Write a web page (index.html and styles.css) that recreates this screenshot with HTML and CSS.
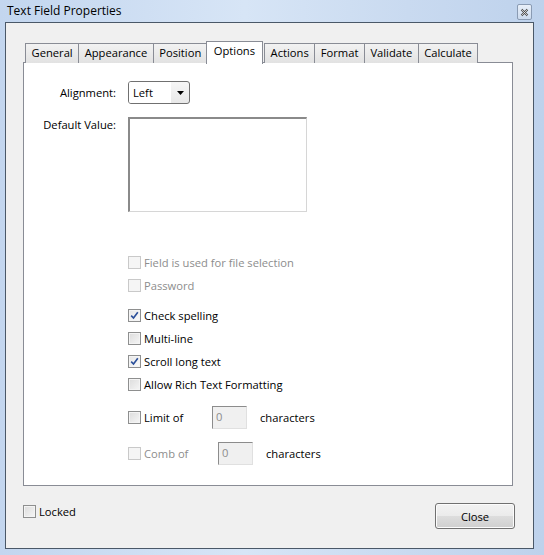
FILE: index.html
```html
<!DOCTYPE html>
<html>
<head>
<meta charset="utf-8">
<link rel="stylesheet" href="styles.css">
</head>
<body>
<div class="window">
  <div class="titlebar">
    <span class="title">Text Field Properties</span>
    <span class="xbtn"><svg width="9" height="9" viewBox="0 0 9 9"><path d="M1.5 1.5 L7.5 7.5 M7.5 1.5 L1.5 7.5" stroke="#4a4a4a" stroke-width="2" fill="none"/><path d="M1.5 1.5 L7.5 7.5 M7.5 1.5 L1.5 7.5" stroke="#ffffff" stroke-width="0.7" fill="none"/></svg></span>
  </div>
  <div class="client">
    <div class="tabs">
      <span class="tab">General</span>
      <span class="tab">Appearance</span>
      <span class="tab">Position</span>
      <span class="tab active">Options</span>
      <span class="tab">Actions</span>
      <span class="tab">Format</span>
      <span class="tab">Validate</span>
      <span class="tab">Calculate</span>
    </div>
    <div class="panel">
      <div class="formrow">
        <span class="label lbl-align">Alignment:</span>
        <span class="combo"><span class="combo-text">Left</span><span class="combo-arrow"><svg width="7" height="4" viewBox="0 0 7 4"><path d="M0 0 H7 L3.5 4 Z" fill="#000"/></svg></span></span>
      </div>
      <div class="formrow row-default">
        <span class="label lbl-default">Default Value:</span>
        <span class="textarea"></span>
      </div>
      <div class="checks">
        <div class="check disabled"><span class="box"></span>Field is used for file selection</div>
        <div class="check disabled"><span class="box"></span>Password</div>
        <div class="check group"><span class="box checked"><svg width="9" height="9" viewBox="0 0 9 9"><path d="M1.2 4.6 L3.5 7 L7.8 1.2" stroke="#2b4f9a" stroke-width="1.6" fill="none"/></svg></span>Check spelling</div>
        <div class="check"><span class="box"></span>Multi-line</div>
        <div class="check"><span class="box checked"><svg width="9" height="9" viewBox="0 0 9 9"><path d="M1.2 4.6 L3.5 7 L7.8 1.2" stroke="#2b4f9a" stroke-width="1.6" fill="none"/></svg></span>Scroll long text</div>
        <div class="check"><span class="box"></span>Allow Rich Text Formatting</div>
        <div class="check limit"><span class="box"></span><span class="lim-label">Limit of</span><span class="num">0</span><span class="chars">characters</span></div>
        <div class="check comb disabled"><span class="box"></span><span class="comb-label">Comb of</span><span class="num">0</span><span class="chars enabled">characters</span></div>
      </div>
    </div>
    <div class="footer">
      <div class="check locked"><span class="box"></span>Locked</div>
      <span class="button">Close</span>
    </div>
  </div>
</div>
</body>
</html>
```
FILE: styles.css
```css
* { box-sizing: border-box; }
html, body { margin: 0; padding: 0; }
body {
  width: 544px;
  height: 555px;
  overflow: hidden;
  font-family: "Open Sans", "Noto Sans", sans-serif;
  font-size: 11.2px;
  color: #000;
}
.window {
  width: 544px;
  height: 555px;
  background: linear-gradient(90deg, #c3d6ef 0%, #d7e5f6 45%, #c9daf0 75%, #bed2ec 100%);
  padding: 0 10px 6px 5px;
  display: flex;
  flex-direction: column;
}
.titlebar {
  height: 22px;
  display: flex;
  align-items: center;
  justify-content: space-between;
  padding-left: 2px;
  flex: none;
}
.title {
  font-size: 12px;
  color: #000;
  margin-top: -1px;
}
.xbtn {
  width: 15px;
  height: 16px;
  border: 1px solid #8a9bb3;
  border-radius: 2px;
  background: linear-gradient(#e9f0f9, #ccdbee);
  display: flex;
  align-items: center;
  justify-content: center;
  margin-right: 2px;
  margin-top: 2px;
}
.client {
  flex: 1;
  background: #f0f0f0;
  border: 1px solid #4a5868;
  padding: 18px 20px 0 17px;
  display: flex;
  flex-direction: column;
}
.tabs {
  display: flex;
  align-items: flex-end;
  height: 22px;
  padding-left: 2px;
  position: relative;
  z-index: 1;
  margin-bottom: -1px;
}
.tab {
  height: 20px;
  border: 1px solid #898c95;
  border-bottom: none;
  margin-right: -1px;
  padding: 0 5.5px;
  background: linear-gradient(#f2f2f2, #e2e2e2);
  line-height: 18px;
  white-space: nowrap;
}
.tab.active {
  height: 23px;
  background: #fff;
  padding: 0 7px;
  margin: 0 1px 0 0;
  line-height: 18px;
  position: relative;
  z-index: 2;
  margin-bottom: -1px;
  margin-left: -1px;
}
.panel {
  height: 424px;
  background: #fff;
  border: 1px solid #898c95;
  padding: 18px 0 0 0;
  display: flex;
  flex-direction: column;
}
.formrow {
  display: flex;
  align-items: flex-start;
}
.label {
  width: 92px;
  text-align: right;
  flex: none;
}
.lbl-align { line-height: 23px; }
.row-default { margin-top: 13px; }
.lbl-default { line-height: 14px; margin-top: 1px; width: 92px; }
.combo {
  margin-left: 12px;
  width: 62px;
  height: 23px;
  border: 1px solid #707070;
  border-radius: 3px;
  background: linear-gradient(#f6f6f6, #e8e8e8);
  display: flex;
  align-items: center;
}
.combo-text {
  flex: 1;
  padding-left: 4px;
  background: #fff;
  height: 100%;
  line-height: 21px;
  border-radius: 2px 0 0 2px;
}
.combo-arrow {
  width: 18px;
  display: flex;
  justify-content: center;
  align-items: center;
}
.textarea {
  margin-left: 12px;
  width: 179px;
  height: 95px;
  background: #fff;
  border-top: 2px solid #8a8a8a;
  border-left: 2px solid #8a8a8a;
  border-right: 1px solid #d6d6d6;
  border-bottom: 1px solid #d6d6d6;
}
.checks {
  margin-top: 39px;
  padding-left: 104px;
  display: flex;
  flex-direction: column;
}
.check {
  height: 23px;
  display: flex;
  align-items: center;
  white-space: nowrap;
}
.check.group { margin-top: 7px; }
.check.limit { margin-top: 10px; }
.check.comb { margin-top: 13px; }
.box {
  width: 13px;
  height: 13px;
  border: 1px solid #8e8f8f;
  background: linear-gradient(135deg, #dcdcdc, #f6f6f6);
  box-shadow: inset 0 0 0 1px #f4f4f4;
  margin-right: 3px;
  flex: none;
  display: flex;
  align-items: center;
  justify-content: center;
}
.box.checked {
  background: linear-gradient(135deg, #e6e6e6, #fbfbfb);
}
.check.disabled { color: #8d8d8d; }
.check.disabled .box {
  border-color: #c9c9c9;
  background: #f5f5f5;
  box-shadow: none;
}
.lim-label { width: 68px; }
.comb-label { width: 74px; color: #8d8d8d; }
.num {
  width: 35px;
  height: 23px;
  background: #f0f0f0;
  border-top: 1px solid #8c8c8c;
  border-left: 1px solid #8c8c8c;
  border-right: 1px solid #e0e0e0;
  border-bottom: 1px solid #e0e0e0;
  color: #8d8d8d;
  padding-left: 3px;
  line-height: 19px;
}
.chars { margin-left: 13px; color: #000; }
.footer {
  display: flex;
  justify-content: space-between;
  align-items: flex-start;
  padding-top: 17px;
  flex: 1;
}
.check.locked { margin-top: 0; height: 17px; }
.button {
  width: 80px;
  height: 26px;
  border: 1px solid #707070;
  border-radius: 3px;
  background: linear-gradient(#f2f2f2 0%, #ebebeb 50%, #dddddd 51%, #cfcfcf 100%);
  box-shadow: inset 0 0 0 1px #fcfcfc;
  display: flex;
  align-items: center;
  justify-content: center;
  margin-right: -2px;
}
```
